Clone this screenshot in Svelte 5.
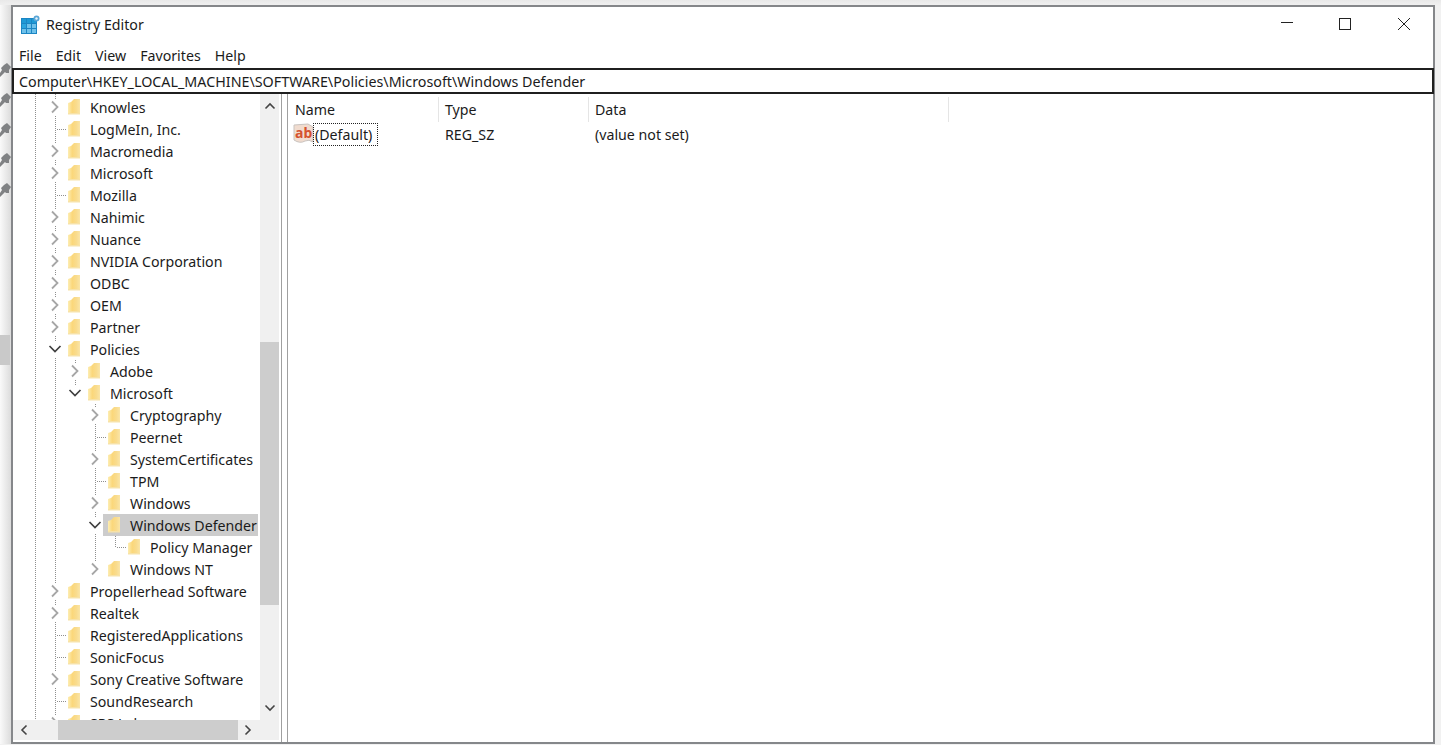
<script>
  const rows = [
    { name: 'Knowles', depth: 0, kind: 'closed' },
    { name: 'LogMeIn, Inc.', depth: 0, kind: 'leaf' },
    { name: 'Macromedia', depth: 0, kind: 'closed' },
    { name: 'Microsoft', depth: 0, kind: 'closed' },
    { name: 'Mozilla', depth: 0, kind: 'leaf' },
    { name: 'Nahimic', depth: 0, kind: 'closed' },
    { name: 'Nuance', depth: 0, kind: 'closed' },
    { name: 'NVIDIA Corporation', depth: 0, kind: 'closed' },
    { name: 'ODBC', depth: 0, kind: 'closed' },
    { name: 'OEM', depth: 0, kind: 'closed' },
    { name: 'Partner', depth: 0, kind: 'closed' },
    { name: 'Policies', depth: 0, kind: 'open' },
    { name: 'Adobe', depth: 1, kind: 'closed' },
    { name: 'Microsoft', depth: 1, kind: 'open' },
    { name: 'Cryptography', depth: 2, kind: 'closed' },
    { name: 'Peernet', depth: 2, kind: 'leaf' },
    { name: 'SystemCertificates', depth: 2, kind: 'closed' },
    { name: 'TPM', depth: 2, kind: 'leaf' },
    { name: 'Windows', depth: 2, kind: 'closed' },
    { name: 'Windows Defender', depth: 2, kind: 'open', selected: true },
    { name: 'Policy Manager', depth: 3, kind: 'leaf' },
    { name: 'Windows NT', depth: 2, kind: 'closed' },
    { name: 'Propellerhead Software', depth: 0, kind: 'closed' },
    { name: 'Realtek', depth: 0, kind: 'closed' },
    { name: 'RegisteredApplications', depth: 0, kind: 'leaf' },
    { name: 'SonicFocus', depth: 0, kind: 'leaf' },
    { name: 'Sony Creative Software', depth: 0, kind: 'closed' },
    { name: 'SoundResearch', depth: 0, kind: 'leaf' },
    { name: 'SRS Labs', depth: 0, kind: 'closed' }
  ];
  const menu = ['File', 'Edit', 'View', 'Favorites', 'Help'];
  const pins = [0, 1, 2, 3, 4];
  const verticals = [
    [22, 0, 626],
    [42, 0, 626],
    [62, 266, 292],
    [82, 310, 476],
    [102, 442, 453]
  ];
  // Horizontal connector of a leaf row, in tree coordinates
  const leaves = rows
    .map((r, i) => ({ ...r, y: 13 + i * 22 }))
    .filter((r) => r.kind === 'leaf');
</script>

<div class="screen">
  <aside class="desktop">
    {#each pins as p}
      <svg class="pin" width="13" height="15" viewBox="0 0 13 15" aria-hidden="true">
        <path d="M6 2 L9 0 L13 4 L11 7 L11 10 L8 10 L7 9 L2 14 L0 14 L0 13 L4 7 L3 5 Z" fill="#808284" />
      </svg>
    {/each}
    <div class="band"></div>
  </aside>

  <main class="window">
    <header class="titlebar">
      <svg class="appicon" width="20" height="20" viewBox="0 0 20 20" aria-hidden="true">
        <rect x="1" y="3" width="16" height="16" fill="#1c86c4" />
        <g fill="#6fc1ea">
          <rect x="7" y="4" width="4" height="4" fill="#1f9ad6" />
          <rect x="12" y="4" width="4" height="4" fill="#1f9ad6" />
          <rect x="2" y="4" width="4" height="4" fill="#1f9ad6" />
          <rect x="2" y="9" width="4" height="4" fill="#2ba5de" />
          <rect x="7" y="9" width="4" height="4" />
          <rect x="12" y="9" width="4" height="4" />
          <rect x="2" y="14" width="4" height="4" />
          <rect x="7" y="14" width="4" height="4" />
          <rect x="12" y="14" width="4" height="4" />
        </g>
        <circle cx="16.5" cy="3.5" r="3" fill="#5aa6d6" />
        <circle cx="16.5" cy="3.5" r="1.2" fill="#e6f3fb" />
      </svg>
      <span class="title">Registry Editor</span>
      <div class="controls">
        <svg width="14" height="14" viewBox="0 0 14 14" aria-hidden="true"><path d="M2 5.5H14" stroke="#222" fill="none" /></svg>
        <svg width="14" height="14" viewBox="0 0 14 14" aria-hidden="true"><rect x="1.5" y="1.5" width="11" height="11" stroke="#222" fill="none" /></svg>
        <svg width="14" height="14" viewBox="0 0 14 14" aria-hidden="true"><path d="M1 1L13 13M13 1L1 13" stroke="#222" fill="none" /></svg>
      </div>
    </header>

    <nav class="menubar">
      {#each menu as m}<span>{m}</span>{/each}
    </nav>

    <div class="address">Computer\HKEY_LOCAL_MACHINE\SOFTWARE\Policies\Microsoft\Windows Defender</div>

    <div class="panes">
      <section class="treepane">
        <div class="tree">
          <svg class="guides" width="247" height="626" aria-hidden="true">
            {#each verticals as [x, y1, y2]}
              <line x1={x + 0.5} x2={x + 0.5} {y1} {y2} />
            {/each}
            {#each leaves as l}
              <line x1={44 + l.depth * 20} x2={53 + l.depth * 20} y1={l.y + 0.5} y2={l.y + 0.5} />
            {/each}
          </svg>
          {#each rows as r}
            <div class="row" style="padding-left: {34 + r.depth * 20}px">
              <span class="twisty">
                {#if r.kind === 'closed'}
                  <svg class="chev" width="16" height="16" viewBox="0 0 16 16" aria-hidden="true"><path d="M5 2.5L10.5 8L5 13.5" stroke="#a6a6a6" stroke-width="1.8" fill="none" /></svg>
                {:else if r.kind === 'open'}
                  <svg class="chev" width="16" height="16" viewBox="0 0 16 16" aria-hidden="true"><path d="M2.5 5L8 10.5L13.5 5" stroke="#404040" stroke-width="1.7" fill="none" /></svg>
                {/if}
              </span>
              <span class="item" class:selected={r.selected}>
                <svg class="folder" width="12" height="17" viewBox="0 0 12 17" aria-hidden="true">
                  <path d="M0 4 L3 3 L6 0 L12 0 L12 15 L4 15 L0 15 Z" fill="url(#fold)" />
                  <path d="M0 14 H12 V15.5 H0 Z" fill="#f7e2a8" />
                </svg>
                <span class="label">{r.name}</span>
              </span>
            </div>
          {/each}
          <svg width="0" height="0" class="defs" aria-hidden="true">
            <defs>
              <linearGradient id="fold" x1="0" x2="1" y1="0" y2="0">
                <stop offset="0" stop-color="#fdeeb4" />
                <stop offset="0.35" stop-color="#fbd77a" />
                <stop offset="0.7" stop-color="#f9dc8e" />
                <stop offset="1" stop-color="#fae5a8" />
              </linearGradient>
            </defs>
          </svg>
        </div>

        <div class="vscroll">
          <svg class="arrow up" width="12" height="8" viewBox="0 0 12 8" aria-hidden="true"><path d="M1.5 6.5L6 2L10.5 6.5" stroke="#444" stroke-width="1.6" fill="none" /></svg>
          <div class="vthumb"></div>
          <svg class="arrow down" width="12" height="8" viewBox="0 0 12 8" aria-hidden="true"><path d="M1.5 1.5L6 6L10.5 1.5" stroke="#444" stroke-width="1.6" fill="none" /></svg>
        </div>

        <div class="hscroll">
          <svg class="harrow" width="8" height="12" viewBox="0 0 8 12" aria-hidden="true"><path d="M6.5 1.5L2 6L6.5 10.5" stroke="#444" stroke-width="1.6" fill="none" /></svg>
          <div class="hthumb"></div>
          <svg class="harrow" width="8" height="12" viewBox="0 0 8 12" aria-hidden="true"><path d="M1.5 1.5L6 6L1.5 10.5" stroke="#444" stroke-width="1.6" fill="none" /></svg>
        </div>
        <div class="corner"></div>
      </section>

      <section class="listpane">
        <div class="lhead">
          <span class="col c1">Name</span>
          <span class="col c2">Type</span>
          <span class="col c3">Data</span>
        </div>
        <div class="lrow">
          <span class="c1 namecell">
            <svg class="abicon" width="21" height="22" viewBox="0 0 21 22" aria-hidden="true">
              <path d="M1 2 L15 1 L20 4 L20 19 Q16 16 12 18 Q7 21 1 17 Z" fill="#f1dccf" stroke="#c9c3bf" />
              <text x="2" y="15" class="abtext">ab</text>
            </svg>
            <span class="focus">(Default)</span>
          </span>
          <span class="c2 cell">REG_SZ</span>
          <span class="c3 cell">(value not set)</span>
        </div>
      </section>
    </div>
  </main>
</div>

<style>
  :global(body) {
    margin: 0;
    background: #eeeeee;
  }
  .screen {
    width: 1441px;
    height: 745px;
    display: flex;
    overflow: hidden;
    box-sizing: border-box;
    padding: 5px 6px 1px 0;
    font-family: "Noto Sans", "Open Sans", sans-serif;
    font-size: 14.2px;
    color: #1b1b1b;
    background: linear-gradient(#e9e9e9, #f1f1f1 6px);
  }
  .desktop {
    width: 11px;
    flex: none;
    display: flex;
    flex-direction: column;
    gap: 15px;
    padding-top: 58px;
    background: linear-gradient(90deg, #fafafa, #dcdcdc);
  }
  .pin {
    display: block;
    margin-left: -2px;
    flex: none;
  }
  .band {
    height: 30px;
    margin-top: 122px;
    width: 10px;
    background: #c9c9c9;
  }
  .window {
    flex: 1;
    min-width: 0;
    display: flex;
    flex-direction: column;
    background: #fff;
    border: 2px solid #85878a;
  }
  .titlebar {
    height: 36px;
    flex: none;
    display: flex;
    align-items: center;
    padding-left: 7px;
    padding-bottom: 2px;
    box-sizing: border-box;
  }
  .appicon {
    flex: none;
    margin-top: 2px;
  }
  .title {
    margin-left: 6px;
  }
  .controls {
    margin-left: auto;
    display: flex;
    gap: 45px;
    padding-right: 22px;
  }
  .menubar {
    height: 25px;
    flex: none;
    display: flex;
    align-items: center;
    padding-left: 6px;
    gap: 14px;
  }
  .address {
    height: 26px;
    flex: none;
    margin: 0 -1px;
    box-sizing: border-box;
    border: 2px solid #1f1f1f;
    font-size: 14.3px;
    line-height: 23px;
    padding-left: 5px;
    white-space: nowrap;
  }
  .panes {
    flex: 1;
    min-height: 0;
    display: flex;
    background: #fff;
  }
  .treepane {
    width: 269px;
    flex: none;
    box-sizing: border-box;
    border-right: 1px solid #a0a0a0;
    padding-right: 2px;
    display: grid;
    grid-template-columns: 247px 19px;
    grid-template-rows: 626px 20px;
  }
  .tree {
    position: relative;
    overflow: hidden;
    padding-top: 2px;
    box-sizing: border-box;
  }
  .guides {
    position: absolute;
    top: 0;
    left: 0;
    pointer-events: none;
  }
  .guides line {
    stroke: #8f8f8f;
    stroke-width: 1;
    stroke-dasharray: 1 1;
  }
  .defs {
    position: absolute;
  }
  .row {
    position: relative;
    height: 22px;
    display: flex;
    align-items: center;
    white-space: nowrap;
  }
  .twisty {
    width: 16px;
    height: 16px;
    flex: none;
    position: relative;
  }
  .chev {
    display: block;
    background: #fff;
  }
  .item {
    height: 22px;
    display: flex;
    align-items: center;
    padding-left: 5px;
    padding-right: 1px;
  }
  .item.selected {
    background: #cccccc;
  }
  .folder {
    flex: none;
  }
  .label {
    margin-left: 10px;
  }
  .vscroll {
    background: #f0f0f0;
    position: relative;
    display: flex;
    flex-direction: column;
    align-items: center;
    padding-top: 8px;
    box-sizing: border-box;
  }
  .arrow {
    flex: none;
  }
  .vthumb {
    width: 100%;
    height: 263px;
    margin-top: 232px;
    background: #cdcdcd;
    flex: none;
  }
  .arrow.down {
    margin-top: 99px;
  }
  .hscroll {
    background: #f0f0f0;
    display: flex;
    align-items: center;
    padding-left: 7px;
  }
  .harrow {
    flex: none;
  }
  .hthumb {
    width: 180px;
    height: 100%;
    margin-left: 30px;
    margin-right: 6px;
    background: #cdcdcd;
    flex: none;
  }
  .corner {
    background: #f0f0f0;
  }
  .listpane {
    flex: 1;
    min-width: 0;
    margin-left: 5px;
    border-left: 1px solid #a0a0a0;
  }
  .lhead {
    height: 28px;
    display: flex;
    align-items: center;
    padding-top: 3px;
    box-sizing: border-box;
  }
  .col {
    height: 100%;
    line-height: 25px;
    border-right: 1px solid #e5e5e5;
    box-sizing: border-box;
    padding-left: 6px;
  }
  .c1 {
    width: 151px;
    flex: none;
  }
  .c2 {
    width: 150px;
    flex: none;
  }
  .c3 {
    width: 360px;
    flex: none;
  }
  .lhead .c1 {
    padding-left: 7px;
  }
  .lrow {
    display: flex;
    align-items: center;
    height: 24px;
  }
  .namecell {
    display: flex;
    align-items: center;
    padding-left: 5px;
    box-sizing: border-box;
  }
  .abicon {
    flex: none;
  }
  .abtext {
    font-family: "Noto Sans", sans-serif;
    font-weight: 700;
    font-size: 14px;
    fill: #d5532f;
  }
  .focus {
    outline: 1px dotted #222;
    outline-offset: -1px;
    padding: 0 6px 0 2px;
    line-height: 23px;
    margin-left: -1px;
  }
  .cell {
    padding-left: 6px;
    box-sizing: border-box;
  }
</style>
